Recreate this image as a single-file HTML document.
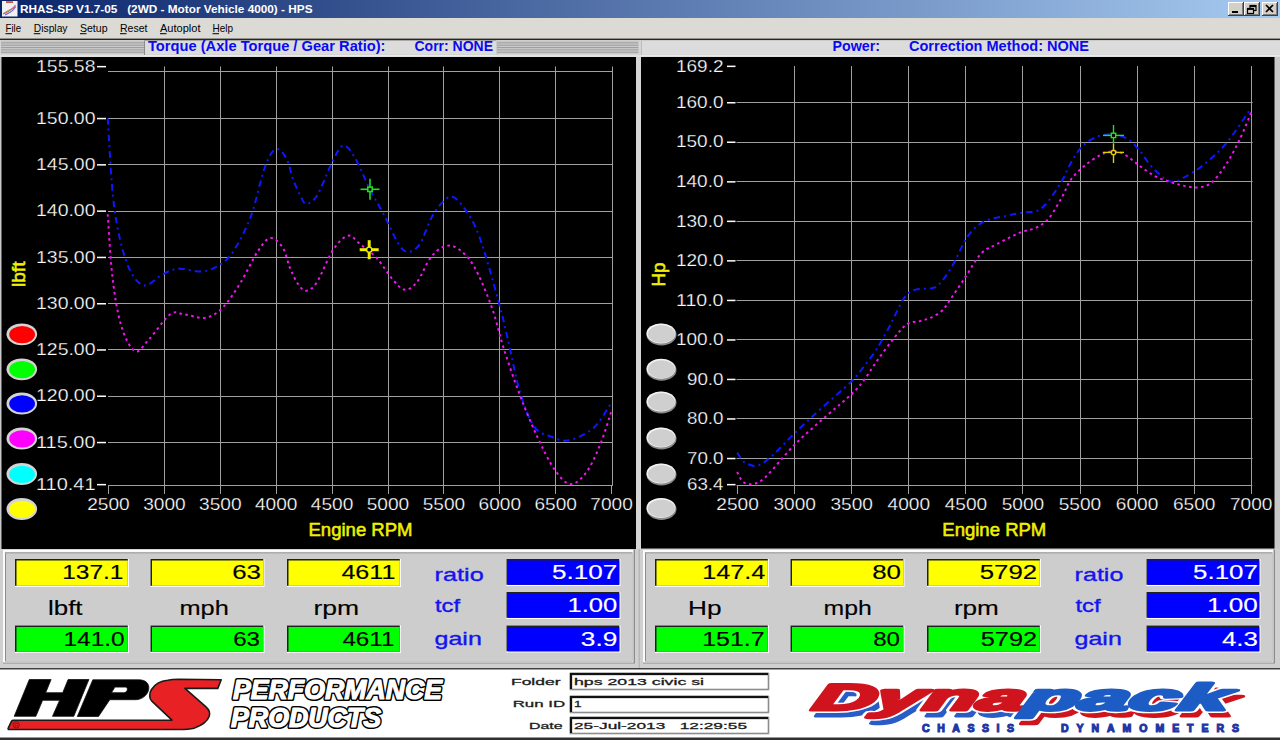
<!DOCTYPE html>
<html><head><meta charset="utf-8"><title>RHAS-SP</title>
<style>html,body{margin:0;padding:0;background:#d4d0c8;overflow:hidden;width:1280px;height:740px}
svg{display:block;font-family:"Liberation Sans",sans-serif}</style></head>
<body><svg width="1280" height="740" viewBox="0 0 1280 740">
<defs>
<linearGradient id="tb" x1="0" x2="1" y1="0" y2="0"><stop offset="0" stop-color="#0a246a"/><stop offset="1" stop-color="#a6caf0"/></linearGradient>
<pattern id="stripes" width="4" height="3" patternUnits="userSpaceOnUse"><rect width="4" height="3" fill="#d8d8d8"/><rect y="1.5" width="4" height="1.5" fill="#a4a4a4"/></pattern>
</defs>
<rect width="1280" height="740" fill="#d4d0c8"/>
<rect x="0" y="0" width="1280" height="18" fill="url(#tb)"/>
<rect x="2" y="1" width="15.5" height="15.5" fill="#f2f0f0"/><rect x="6" y="1.2" width="7" height="1.8" fill="#d05040"/><path d="M3,14 C7,11 11,9.5 15.5,7" stroke="#40c060" stroke-width="1.3" fill="none"/><path d="M4,13.6 C8,11.5 12,10 15.5,5" stroke="#f06060" stroke-width="1.3" fill="none"/><path d="M5,14.8 C9,12.8 13,12 15.5,6.5" stroke="#7070f0" stroke-width="1.3" fill="none"/>
<text x="20.0" y="13.2" font-size="11.5" text-anchor="start" fill="#fff" font-weight="bold" textLength="292.5" lengthAdjust="spacingAndGlyphs" font-family="Liberation Sans, sans-serif">RHAS-SP V1.7-05 &#160; (2WD - Motor Vehicle 4000) - HPS</text>
<rect x="1228" y="2" width="16" height="14" fill="#404040"/><rect x="1228" y="2" width="15" height="13" fill="#ffffff"/><rect x="1229" y="3" width="14" height="12" fill="#808080"/><rect x="1229" y="3" width="13" height="11" fill="#d4d0c8"/>
<rect x="1244" y="2" width="16" height="14" fill="#404040"/><rect x="1244" y="2" width="15" height="13" fill="#ffffff"/><rect x="1245" y="3" width="14" height="12" fill="#808080"/><rect x="1245" y="3" width="13" height="11" fill="#d4d0c8"/>
<rect x="1262" y="2" width="16" height="14" fill="#404040"/><rect x="1262" y="2" width="15" height="13" fill="#ffffff"/><rect x="1263" y="3" width="14" height="12" fill="#808080"/><rect x="1263" y="3" width="13" height="11" fill="#d4d0c8"/>
<rect x="1232" y="11" width="6" height="2" fill="#000"/>
<g fill="none" stroke="#000" stroke-width="1.2"><rect x="1250" y="5.5" width="6" height="5"/><rect x="1247.5" y="8.5" width="6" height="5" fill="#d4d0c8"/><line x1="1250" y1="6.5" x2="1256" y2="6.5"/><line x1="1247.5" y1="9.3" x2="1253.5" y2="9.3"/></g>
<g stroke="#000" stroke-width="1.7"><line x1="1266" y1="5" x2="1273" y2="12"/><line x1="1273" y1="5" x2="1266" y2="12"/></g>
<rect x="0" y="18" width="1280" height="20.5" fill="#dcdad4"/>
<rect x="0" y="38.6" width="1280" height="1.6" fill="#262626"/>
<text x="5.5" y="31.8" font-size="11.5" text-anchor="start" fill="#000" font-weight="normal" textLength="15.5" lengthAdjust="spacingAndGlyphs" font-family="Liberation Sans, sans-serif">File</text>
<rect x="5.5" y="33.2" width="6.5" height="1" fill="#000"/>
<text x="33.8" y="31.8" font-size="11.5" text-anchor="start" fill="#000" font-weight="normal" textLength="33.7" lengthAdjust="spacingAndGlyphs" font-family="Liberation Sans, sans-serif">Display</text>
<rect x="33.8" y="33.2" width="6.5" height="1" fill="#000"/>
<text x="80.0" y="31.8" font-size="11.5" text-anchor="start" fill="#000" font-weight="normal" textLength="27.5" lengthAdjust="spacingAndGlyphs" font-family="Liberation Sans, sans-serif">Setup</text>
<rect x="80.0" y="33.2" width="6.5" height="1" fill="#000"/>
<text x="120.0" y="31.8" font-size="11.5" text-anchor="start" fill="#000" font-weight="normal" textLength="27.5" lengthAdjust="spacingAndGlyphs" font-family="Liberation Sans, sans-serif">Reset</text>
<rect x="120.0" y="33.2" width="6.5" height="1" fill="#000"/>
<text x="160.0" y="31.8" font-size="11.5" text-anchor="start" fill="#000" font-weight="normal" textLength="40.5" lengthAdjust="spacingAndGlyphs" font-family="Liberation Sans, sans-serif">Autoplot</text>
<rect x="160.0" y="33.2" width="6.5" height="1" fill="#000"/>
<text x="212.5" y="31.8" font-size="11.5" text-anchor="start" fill="#000" font-weight="normal" textLength="20.5" lengthAdjust="spacingAndGlyphs" font-family="Liberation Sans, sans-serif">Help</text>
<rect x="212.5" y="33.2" width="6.5" height="1" fill="#000"/>
<rect x="0" y="40.2" width="1280" height="16.8" fill="#d6d6d6"/>
<g transform="translate(1,0) scale(143.3,1)"><rect x="0" y="41.75" width="1" height="0.95" fill="#9c9c9c"/><rect x="0" y="43.50" width="1" height="0.95" fill="#9c9c9c"/><rect x="0" y="45.25" width="1" height="0.95" fill="#9c9c9c"/><rect x="0" y="47.00" width="1" height="0.95" fill="#9c9c9c"/><rect x="0" y="48.75" width="1" height="0.95" fill="#9c9c9c"/><rect x="0" y="50.50" width="1" height="0.95" fill="#9c9c9c"/><rect x="0" y="52.25" width="1" height="0.95" fill="#9c9c9c"/></g>
<g transform="translate(497,0) scale(141.5,1)"><rect x="0" y="41.75" width="1" height="0.95" fill="#9c9c9c"/><rect x="0" y="43.50" width="1" height="0.95" fill="#9c9c9c"/><rect x="0" y="45.25" width="1" height="0.95" fill="#9c9c9c"/><rect x="0" y="47.00" width="1" height="0.95" fill="#9c9c9c"/><rect x="0" y="48.75" width="1" height="0.95" fill="#9c9c9c"/><rect x="0" y="50.50" width="1" height="0.95" fill="#9c9c9c"/><rect x="0" y="52.25" width="1" height="0.95" fill="#9c9c9c"/></g>
<rect x="144" y="40.3" width="353" height="15.2" fill="#fafafa"/><rect x="144" y="40.3" width="352.5" height="14.7" fill="#8c8c8c"/><rect x="145" y="41" width="351.3" height="13.9" fill="#dcdcdc"/>
<rect x="641" y="40.3" width="639" height="15.2" fill="#fafafa"/><rect x="641" y="40.3" width="639" height="14.7" fill="#bcbcbc"/><rect x="642" y="41" width="638" height="13.9" fill="#dcdcdc"/>
<rect x="0" y="55.5" width="1280" height="1" fill="#ececec"/>
<g font-family="Liberation Sans, sans-serif" font-weight="bold" fill="#0a0af0">
<text x="148.0" y="50.7" font-size="14" text-anchor="start" fill="#0a0af0" font-weight="bold" textLength="237.5" lengthAdjust="spacingAndGlyphs" >Torque (Axle Torque / Gear Ratio):</text>
<text x="414.5" y="50.7" font-size="14" text-anchor="start" fill="#0a0af0" font-weight="bold" textLength="78.5" lengthAdjust="spacingAndGlyphs" >Corr: NONE</text>
<text x="832.5" y="50.7" font-size="14" text-anchor="start" fill="#0a0af0" font-weight="bold" textLength="47.5" lengthAdjust="spacingAndGlyphs" >Power:</text>
<text x="909.0" y="50.7" font-size="14" text-anchor="start" fill="#0a0af0" font-weight="bold" textLength="180.0" lengthAdjust="spacingAndGlyphs" >Correction Method: NONE</text>
</g>
<rect x="0" y="57" width="1280" height="492" fill="#c8c8c8"/>
<rect x="1.5" y="57" width="634.5" height="492.5" fill="#000"/>
<rect x="641" y="57" width="633.5" height="491.5" fill="#000"/>
<rect x="636" y="57" width="5" height="492" fill="#d6d6d6"/>
<g stroke="#a0a0a0" stroke-width="1" fill="none"><line x1="164.5" y1="66.5" x2="164.5" y2="485.5" /><line x1="220.5" y1="66.5" x2="220.5" y2="485.5" /><line x1="276.5" y1="66.5" x2="276.5" y2="485.5" /><line x1="332.5" y1="66.5" x2="332.5" y2="485.5" /><line x1="388.5" y1="66.5" x2="388.5" y2="485.5" /><line x1="443.5" y1="66.5" x2="443.5" y2="485.5" /><line x1="499.5" y1="66.5" x2="499.5" y2="485.5" /><line x1="555.5" y1="66.5" x2="555.5" y2="485.5" /><line x1="612.5" y1="66.5" x2="612.5" y2="485.5" /><line x1="108" y1="71.5" x2="612.8" y2="71.5" /><line x1="108" y1="118.5" x2="613" y2="118.5" /><line x1="108" y1="164.5" x2="613" y2="164.5" /><line x1="108" y1="211.5" x2="613" y2="211.5" /><line x1="108" y1="257.5" x2="613" y2="257.5" /><line x1="108" y1="303.5" x2="613" y2="303.5" /><line x1="108" y1="349.5" x2="613" y2="349.5" /><line x1="108" y1="396.5" x2="613" y2="396.5" /><line x1="108" y1="442.5" x2="613" y2="442.5" /><line x1="108" y1="485.5" x2="612.8" y2="485.5" /><line x1="108.5" y1="485.5" x2="108.5" y2="494" /><line x1="164.5" y1="485.5" x2="164.5" y2="494" /><line x1="220.5" y1="485.5" x2="220.5" y2="494" /><line x1="276.5" y1="485.5" x2="276.5" y2="494" /><line x1="332.5" y1="485.5" x2="332.5" y2="494" /><line x1="388.5" y1="485.5" x2="388.5" y2="494" /><line x1="443.5" y1="485.5" x2="443.5" y2="494" /><line x1="499.5" y1="485.5" x2="499.5" y2="494" /><line x1="555.5" y1="485.5" x2="555.5" y2="494" /><line x1="611.5" y1="485.5" x2="611.5" y2="494" /></g><g font-family="Liberation Sans, sans-serif" stroke="#000" stroke-width="0.25"><text x="95.5" y="71.8" font-size="16.5" text-anchor="end" fill="#fff" font-weight="normal" textLength="59.5" lengthAdjust="spacingAndGlyphs" >155.58</text><rect x="97" y="65.9" width="9" height="1.5" fill="#fff" stroke="none"/><text x="95.5" y="123.7" font-size="16.5" text-anchor="end" fill="#fff" font-weight="normal" textLength="59.5" lengthAdjust="spacingAndGlyphs" >150.00</text><rect x="97" y="117.8" width="9" height="1.5" fill="#fff" stroke="none"/><text x="95.5" y="170.0" font-size="16.5" text-anchor="end" fill="#fff" font-weight="normal" textLength="59.5" lengthAdjust="spacingAndGlyphs" >145.00</text><rect x="97" y="164.1" width="9" height="1.5" fill="#fff" stroke="none"/><text x="95.5" y="216.3" font-size="16.5" text-anchor="end" fill="#fff" font-weight="normal" textLength="59.5" lengthAdjust="spacingAndGlyphs" >140.00</text><rect x="97" y="210.4" width="9" height="1.5" fill="#fff" stroke="none"/><text x="95.5" y="262.6" font-size="16.5" text-anchor="end" fill="#fff" font-weight="normal" textLength="59.5" lengthAdjust="spacingAndGlyphs" >135.00</text><rect x="97" y="256.7" width="9" height="1.5" fill="#fff" stroke="none"/><text x="95.5" y="308.9" font-size="16.5" text-anchor="end" fill="#fff" font-weight="normal" textLength="59.5" lengthAdjust="spacingAndGlyphs" >130.00</text><rect x="97" y="303.0" width="9" height="1.5" fill="#fff" stroke="none"/><text x="95.5" y="355.1" font-size="16.5" text-anchor="end" fill="#fff" font-weight="normal" textLength="59.5" lengthAdjust="spacingAndGlyphs" >125.00</text><rect x="97" y="349.2" width="9" height="1.5" fill="#fff" stroke="none"/><text x="95.5" y="401.4" font-size="16.5" text-anchor="end" fill="#fff" font-weight="normal" textLength="59.5" lengthAdjust="spacingAndGlyphs" >120.00</text><rect x="97" y="395.5" width="9" height="1.5" fill="#fff" stroke="none"/><text x="95.5" y="447.7" font-size="16.5" text-anchor="end" fill="#fff" font-weight="normal" textLength="59.5" lengthAdjust="spacingAndGlyphs" >115.00</text><rect x="97" y="441.8" width="9" height="1.5" fill="#fff" stroke="none"/><text x="95.5" y="489.8" font-size="16.5" text-anchor="end" fill="#fff" font-weight="normal" textLength="59.5" lengthAdjust="spacingAndGlyphs" >110.41</text><rect x="97" y="483.9" width="9" height="1.5" fill="#fff" stroke="none"/><text x="108.5" y="509.6" font-size="16.5" text-anchor="middle" fill="#fff" font-weight="normal" textLength="42.5" lengthAdjust="spacingAndGlyphs" >2500</text><text x="164.4" y="509.6" font-size="16.5" text-anchor="middle" fill="#fff" font-weight="normal" textLength="42.5" lengthAdjust="spacingAndGlyphs" >3000</text><text x="220.3" y="509.6" font-size="16.5" text-anchor="middle" fill="#fff" font-weight="normal" textLength="42.5" lengthAdjust="spacingAndGlyphs" >3500</text><text x="276.2" y="509.6" font-size="16.5" text-anchor="middle" fill="#fff" font-weight="normal" textLength="42.5" lengthAdjust="spacingAndGlyphs" >4000</text><text x="332.1" y="509.6" font-size="16.5" text-anchor="middle" fill="#fff" font-weight="normal" textLength="42.5" lengthAdjust="spacingAndGlyphs" >4500</text><text x="388.0" y="509.6" font-size="16.5" text-anchor="middle" fill="#fff" font-weight="normal" textLength="42.5" lengthAdjust="spacingAndGlyphs" >5000</text><text x="443.9" y="509.6" font-size="16.5" text-anchor="middle" fill="#fff" font-weight="normal" textLength="42.5" lengthAdjust="spacingAndGlyphs" >5500</text><text x="499.8" y="509.6" font-size="16.5" text-anchor="middle" fill="#fff" font-weight="normal" textLength="42.5" lengthAdjust="spacingAndGlyphs" >6000</text><text x="555.7" y="509.6" font-size="16.5" text-anchor="middle" fill="#fff" font-weight="normal" textLength="42.5" lengthAdjust="spacingAndGlyphs" >6500</text><text x="611.6" y="509.6" font-size="16.5" text-anchor="middle" fill="#fff" font-weight="normal" textLength="42.5" lengthAdjust="spacingAndGlyphs" >7000</text></g>
<g stroke="#a0a0a0" stroke-width="1" fill="none"><line x1="794.5" y1="66" x2="794.5" y2="485.5" /><line x1="851.5" y1="66" x2="851.5" y2="485.5" /><line x1="908.5" y1="66" x2="908.5" y2="485.5" /><line x1="965.5" y1="66" x2="965.5" y2="485.5" /><line x1="1022.5" y1="66" x2="1022.5" y2="485.5" /><line x1="1080.5" y1="66" x2="1080.5" y2="485.5" /><line x1="1137.5" y1="66" x2="1137.5" y2="485.5" /><line x1="1194.5" y1="66" x2="1194.5" y2="485.5" /><line x1="1251.5" y1="66" x2="1251.5" y2="485.5" /><line x1="736.5" y1="102.5" x2="1252.5" y2="102.5" /><line x1="736.5" y1="142.5" x2="1252.5" y2="142.5" /><line x1="736.5" y1="181.5" x2="1252.5" y2="181.5" /><line x1="736.5" y1="221.5" x2="1252.5" y2="221.5" /><line x1="736.5" y1="260.5" x2="1252.5" y2="260.5" /><line x1="736.5" y1="300.5" x2="1252.5" y2="300.5" /><line x1="736.5" y1="339.5" x2="1252.5" y2="339.5" /><line x1="736.5" y1="379.5" x2="1252.5" y2="379.5" /><line x1="736.5" y1="418.5" x2="1252.5" y2="418.5" /><line x1="736.5" y1="458.5" x2="1252.5" y2="458.5" /><line x1="736.5" y1="485.5" x2="1252.3" y2="485.5" /><line x1="737.5" y1="485.5" x2="737.5" y2="494" /><line x1="794.5" y1="485.5" x2="794.5" y2="494" /><line x1="851.5" y1="485.5" x2="851.5" y2="494" /><line x1="908.5" y1="485.5" x2="908.5" y2="494" /><line x1="965.5" y1="485.5" x2="965.5" y2="494" /><line x1="1022.5" y1="485.5" x2="1022.5" y2="494" /><line x1="1080.5" y1="485.5" x2="1080.5" y2="494" /><line x1="1137.5" y1="485.5" x2="1137.5" y2="494" /><line x1="1194.5" y1="485.5" x2="1194.5" y2="494" /><line x1="1251.5" y1="485.5" x2="1251.5" y2="494" /></g><g font-family="Liberation Sans, sans-serif" stroke="#000" stroke-width="0.25"><text x="723.5" y="71.5" font-size="16.5" text-anchor="end" fill="#fff" font-weight="normal" textLength="47.5" lengthAdjust="spacingAndGlyphs" >169.2</text><rect x="727" y="65.6" width="8.5" height="1.5" fill="#fff" stroke="none"/><text x="723.5" y="107.9" font-size="16.5" text-anchor="end" fill="#fff" font-weight="normal" textLength="47.5" lengthAdjust="spacingAndGlyphs" >160.0</text><rect x="727" y="102.0" width="8.5" height="1.5" fill="#fff" stroke="none"/><text x="723.5" y="147.4" font-size="16.5" text-anchor="end" fill="#fff" font-weight="normal" textLength="47.5" lengthAdjust="spacingAndGlyphs" >150.0</text><rect x="727" y="141.5" width="8.5" height="1.5" fill="#fff" stroke="none"/><text x="723.5" y="187.0" font-size="16.5" text-anchor="end" fill="#fff" font-weight="normal" textLength="47.5" lengthAdjust="spacingAndGlyphs" >140.0</text><rect x="727" y="181.1" width="8.5" height="1.5" fill="#fff" stroke="none"/><text x="723.5" y="226.5" font-size="16.5" text-anchor="end" fill="#fff" font-weight="normal" textLength="47.5" lengthAdjust="spacingAndGlyphs" >130.0</text><rect x="727" y="220.6" width="8.5" height="1.5" fill="#fff" stroke="none"/><text x="723.5" y="266.0" font-size="16.5" text-anchor="end" fill="#fff" font-weight="normal" textLength="47.5" lengthAdjust="spacingAndGlyphs" >120.0</text><rect x="727" y="260.1" width="8.5" height="1.5" fill="#fff" stroke="none"/><text x="723.5" y="305.6" font-size="16.5" text-anchor="end" fill="#fff" font-weight="normal" textLength="47.5" lengthAdjust="spacingAndGlyphs" >110.0</text><rect x="727" y="299.7" width="8.5" height="1.5" fill="#fff" stroke="none"/><text x="723.5" y="345.1" font-size="16.5" text-anchor="end" fill="#fff" font-weight="normal" textLength="47.5" lengthAdjust="spacingAndGlyphs" >100.0</text><rect x="727" y="339.2" width="8.5" height="1.5" fill="#fff" stroke="none"/><text x="723.5" y="384.6" font-size="16.5" text-anchor="end" fill="#fff" font-weight="normal" textLength="36.5" lengthAdjust="spacingAndGlyphs" >90.0</text><rect x="727" y="378.7" width="8.5" height="1.5" fill="#fff" stroke="none"/><text x="723.5" y="424.1" font-size="16.5" text-anchor="end" fill="#fff" font-weight="normal" textLength="36.5" lengthAdjust="spacingAndGlyphs" >80.0</text><rect x="727" y="418.2" width="8.5" height="1.5" fill="#fff" stroke="none"/><text x="723.5" y="463.7" font-size="16.5" text-anchor="end" fill="#fff" font-weight="normal" textLength="36.5" lengthAdjust="spacingAndGlyphs" >70.0</text><rect x="727" y="457.8" width="8.5" height="1.5" fill="#fff" stroke="none"/><text x="723.5" y="489.8" font-size="16.5" text-anchor="end" fill="#fff" font-weight="normal" textLength="36.5" lengthAdjust="spacingAndGlyphs" >63.4</text><rect x="727" y="483.9" width="8.5" height="1.5" fill="#fff" stroke="none"/><text x="737.6" y="509.6" font-size="16.5" text-anchor="middle" fill="#fff" font-weight="normal" textLength="42.5" lengthAdjust="spacingAndGlyphs" >2500</text><text x="794.7" y="509.6" font-size="16.5" text-anchor="middle" fill="#fff" font-weight="normal" textLength="42.5" lengthAdjust="spacingAndGlyphs" >3000</text><text x="851.7" y="509.6" font-size="16.5" text-anchor="middle" fill="#fff" font-weight="normal" textLength="42.5" lengthAdjust="spacingAndGlyphs" >3500</text><text x="908.8" y="509.6" font-size="16.5" text-anchor="middle" fill="#fff" font-weight="normal" textLength="42.5" lengthAdjust="spacingAndGlyphs" >4000</text><text x="965.9" y="509.6" font-size="16.5" text-anchor="middle" fill="#fff" font-weight="normal" textLength="42.5" lengthAdjust="spacingAndGlyphs" >4500</text><text x="1023.0" y="509.6" font-size="16.5" text-anchor="middle" fill="#fff" font-weight="normal" textLength="42.5" lengthAdjust="spacingAndGlyphs" >5000</text><text x="1080.0" y="509.6" font-size="16.5" text-anchor="middle" fill="#fff" font-weight="normal" textLength="42.5" lengthAdjust="spacingAndGlyphs" >5500</text><text x="1137.1" y="509.6" font-size="16.5" text-anchor="middle" fill="#fff" font-weight="normal" textLength="42.5" lengthAdjust="spacingAndGlyphs" >6000</text><text x="1194.2" y="509.6" font-size="16.5" text-anchor="middle" fill="#fff" font-weight="normal" textLength="42.5" lengthAdjust="spacingAndGlyphs" >6500</text><text x="1251.2" y="509.6" font-size="16.5" text-anchor="middle" fill="#fff" font-weight="normal" textLength="42.5" lengthAdjust="spacingAndGlyphs" >7000</text></g>
<path d="M107.7,118.3 C108.8,132.8 110.9,181.5 114.0,205.4 C117.1,229.3 121.6,248.3 126.4,261.6 C131.2,274.9 136.8,283.1 142.9,285.2 C149.0,287.3 157.2,276.8 163.2,274.0 C169.2,271.2 172.6,269.1 179.0,268.7 C185.4,268.3 195.2,272.1 201.9,271.5 C208.7,270.9 214.2,268.4 219.5,265.0 C224.8,261.6 228.2,259.2 233.5,251.0 C238.8,242.8 245.8,230.0 251.0,216.0 C256.2,202.0 260.9,177.9 265.0,166.8 C269.1,155.7 272.2,150.7 275.7,149.2 C279.2,147.7 283.3,153.0 286.2,158.0 C289.1,163.0 290.7,172.8 293.0,179.0 C295.3,185.2 297.8,190.9 300.0,195.0 C302.2,199.1 303.4,203.7 306.2,203.8 C309.0,203.9 312.9,202.0 317.0,195.7 C321.1,189.4 326.2,174.3 330.5,166.0 C334.8,157.7 338.6,147.1 342.7,145.7 C346.8,144.3 350.4,150.6 354.9,157.8 C359.4,165.0 364.8,179.3 369.7,189.0 C374.6,198.7 379.9,207.0 384.6,216.0 C389.3,225.0 394.2,237.0 398.0,243.0 C401.8,249.0 404.0,251.7 407.6,251.9 C411.2,252.1 415.4,250.5 419.7,244.3 C424.0,238.1 428.2,222.5 433.2,214.6 C438.2,206.7 444.5,198.3 449.5,197.0 C454.5,195.7 458.1,200.0 463.0,206.5 C467.9,213.0 473.3,220.4 479.2,236.2 C485.1,252.0 493.6,283.3 498.6,301.5 C503.6,319.7 505.7,330.5 509.2,345.4 C512.7,360.3 515.6,377.5 519.7,391.0 C523.8,404.5 528.5,418.6 533.8,426.2 C539.1,433.8 545.5,434.4 551.4,436.8 C557.3,439.2 562.0,441.8 569.0,440.3 C576.0,438.8 586.5,434.1 593.5,428.0 C600.5,421.9 608.1,407.5 611.0,403.4" fill="none" stroke="#0c18ff" stroke-width="2" stroke-dasharray="6.5 4 2 4" stroke-linecap="butt"/><path d="M107.7,214.2 C108.5,224.4 110.1,257.2 112.3,275.7 C114.5,294.2 117.2,312.4 121.0,325.0 C124.8,337.6 130.3,348.9 135.0,351.2 C139.7,353.5 143.3,345.1 149.2,339.0 C155.1,332.9 164.5,318.4 170.3,314.3 C176.2,310.2 178.5,313.7 184.3,314.3 C190.2,314.9 199.0,319.0 205.4,317.8 C211.8,316.6 217.2,313.2 223.0,307.3 C228.8,301.4 234.7,292.1 240.5,282.7 C246.3,273.3 253.0,258.4 258.0,251.0 C263.0,243.6 266.3,238.6 270.4,238.0 C274.5,237.4 279.4,242.6 282.7,247.6 C286.0,252.6 287.4,261.9 290.0,268.0 C292.6,274.1 295.3,280.2 298.0,284.0 C300.7,287.8 303.0,291.1 306.2,290.8 C309.4,290.5 312.5,288.9 317.0,282.0 C321.5,275.1 328.0,257.4 333.2,249.7 C338.4,242.0 343.5,236.6 348.0,235.7 C352.5,234.8 355.6,240.6 360.3,244.3 C365.1,248.0 371.1,251.9 376.5,257.8 C381.9,263.7 388.0,274.2 392.7,279.5 C397.4,284.8 400.8,289.3 404.9,289.7 C408.9,290.1 412.7,287.3 417.0,282.0 C421.3,276.7 426.0,263.7 430.5,257.8 C435.0,251.9 439.5,248.1 444.0,246.5 C448.5,244.9 452.6,245.2 457.6,248.4 C462.6,251.7 468.1,256.3 473.8,266.0 C479.5,275.7 486.6,293.0 491.6,306.8 C496.6,320.6 499.2,334.4 503.9,349.0 C508.6,363.6 514.1,380.0 519.7,394.6 C525.3,409.2 531.4,424.2 537.3,436.8 C543.2,449.4 549.3,462.2 554.9,470.1 C560.5,478.0 565.4,483.9 570.7,484.2 C576.0,484.5 581.5,478.7 586.5,472.0 C591.5,465.3 596.4,453.8 600.5,443.8 C604.6,433.8 609.2,417.5 611.0,412.2" fill="none" stroke="#f014f0" stroke-width="2" stroke-dasharray="2.6 3.4"/>
<path d="M737.1,452.6 C738.4,454.2 741.2,460.1 744.6,462.3 C748.0,464.5 753.0,466.7 757.6,465.6 C762.2,464.5 765.9,461.2 772.1,455.8 C778.3,450.4 786.7,440.9 794.8,433.1 C802.9,425.3 811.3,417.4 820.8,408.8 C830.3,400.2 844.5,388.3 851.6,381.3 C858.7,374.3 859.7,371.7 863.5,366.9 C867.3,362.1 871.4,356.9 874.3,352.7 C877.2,348.5 878.5,346.2 881.0,341.9 C883.5,337.6 886.9,331.3 889.2,327.0 C891.5,322.7 892.5,320.5 894.6,316.2 C896.7,311.9 899.8,305.2 902.0,301.4 C904.2,297.6 905.6,295.5 908.0,293.5 C910.4,291.5 912.4,290.2 916.2,289.4 C920.0,288.5 927.0,289.2 930.8,288.4 C934.6,287.6 935.4,288.1 938.9,284.5 C942.4,280.9 947.0,274.8 951.9,266.7 C956.8,258.6 962.6,243.5 968.0,235.9 C973.4,228.3 977.8,224.7 984.3,221.3 C990.8,218.0 1000.5,217.3 1007.0,215.8 C1013.5,214.3 1018.1,213.4 1023.2,212.5 C1028.3,211.6 1033.5,212.7 1037.8,210.6 C1042.1,208.5 1045.1,205.2 1049.1,200.2 C1053.1,195.2 1058.3,187.2 1062.0,180.8 C1065.7,174.4 1068.0,167.7 1071.4,161.9 C1074.9,156.1 1078.3,150.1 1082.7,145.8 C1087.1,141.6 1092.8,138.3 1097.8,136.4 C1102.8,134.5 1108.0,134.0 1113.0,134.5 C1118.0,135.0 1123.7,136.5 1128.1,139.2 C1132.5,141.9 1135.7,146.1 1139.5,150.5 C1143.3,154.9 1146.7,161.1 1150.8,165.7 C1154.9,170.3 1160.2,175.3 1164.0,178.0 C1167.8,180.7 1170.0,182.0 1173.5,181.8 C1177.0,181.6 1179.9,179.8 1184.9,177.0 C1190.0,174.2 1196.9,170.4 1203.8,164.7 C1210.7,159.0 1218.6,152.4 1226.5,143.0 C1234.4,133.6 1247.0,113.8 1251.1,108.0" fill="none" stroke="#0c18ff" stroke-width="2" stroke-dasharray="6.5 4 2 4" stroke-linecap="butt"/><path d="M737.1,472.0 C738.1,473.6 740.4,479.8 743.0,481.8 C745.6,483.8 748.9,484.8 752.7,484.0 C756.5,483.2 758.7,483.5 765.7,476.9 C772.7,470.3 784.5,454.8 794.8,444.5 C805.0,434.2 817.7,423.7 827.2,415.3 C836.7,406.9 845.4,400.1 851.6,394.2 C857.8,388.3 860.0,385.3 864.2,379.7 C868.4,374.1 872.2,367.6 877.0,360.8 C881.8,354.1 888.2,345.3 893.2,339.2 C898.2,333.1 902.3,327.3 906.8,324.3 C911.3,321.3 916.3,322.1 920.3,321.0 C924.3,319.9 927.4,319.3 931.0,317.6 C934.6,315.9 939.0,313.4 941.9,310.8 C944.8,308.2 944.8,307.5 948.6,302.0 C952.4,296.5 959.4,286.1 964.8,278.0 C970.2,269.9 975.6,259.4 981.0,253.7 C986.4,248.0 990.7,247.5 997.2,244.0 C1003.7,240.5 1013.5,235.3 1020.0,232.6 C1026.5,229.9 1031.2,230.2 1036.0,227.8 C1040.8,225.4 1044.8,223.1 1049.1,218.0 C1053.4,212.9 1058.3,203.4 1062.0,197.0 C1065.7,190.6 1067.2,184.7 1071.0,179.5 C1074.8,174.3 1079.5,169.9 1084.6,165.7 C1089.7,161.5 1096.9,156.7 1101.6,154.3 C1106.3,151.9 1109.2,151.5 1113.0,151.5 C1116.8,151.5 1119.9,151.9 1124.3,154.3 C1128.7,156.7 1134.5,162.1 1139.5,165.7 C1144.5,169.3 1149.6,173.3 1154.6,176.0 C1159.6,178.7 1165.0,180.2 1169.7,181.8 C1174.4,183.4 1178.3,184.7 1183.0,185.6 C1187.7,186.5 1193.4,187.9 1198.1,187.4 C1202.8,186.9 1206.7,186.6 1211.4,182.7 C1216.1,178.8 1221.8,171.1 1226.5,163.8 C1231.2,156.6 1235.7,147.7 1239.8,139.2 C1243.9,130.7 1249.2,117.1 1251.1,112.7" fill="none" stroke="#f014f0" stroke-width="2" stroke-dasharray="2.6 3.4"/>
<g stroke="#20e020" stroke-width="1.6" fill="none"><line x1="360.5" y1="189.3" x2="379.5" y2="189.3"/><line x1="370.0" y1="178.8" x2="370.0" y2="199.8"/><rect x="367.8" y="187.1" width="4.4" height="4.4" fill="#000"/></g>
<g stroke="#f0f000" stroke-width="3" fill="none"><line x1="359.7" y1="249.7" x2="378.7" y2="249.7"/><line x1="369.2" y1="240.2" x2="369.2" y2="259.2"/><circle cx="369.2" cy="249.7" r="2.6" fill="#000" stroke-width="1.4"/></g>
<g stroke="#20e020" stroke-width="1.4" fill="none"><line x1="1103" y1="135.4" x2="1124" y2="135.4"/><line x1="1113.5" y1="125" x2="1113.5" y2="143.5"/><rect x="1111.3" y="133.2" width="4.4" height="4.4" fill="#000"/></g>
<g stroke="#e0d000" stroke-width="1.4" fill="none"><line x1="1103" y1="152.4" x2="1124" y2="152.4"/><line x1="1113.5" y1="143.5" x2="1113.5" y2="163"/><circle cx="1113.5" cy="152.4" r="2.2" fill="#000"/></g>
<g font-family="Liberation Sans, sans-serif" fill="#f0f000" stroke="#f0f000" stroke-width="0.55">
<text x="360.5" y="536.0" font-size="18.5" text-anchor="middle" fill="#f0f000" font-weight="normal" textLength="104.0" lengthAdjust="spacingAndGlyphs" >Engine RPM</text>
<text x="994.3" y="536.0" font-size="18.5" text-anchor="middle" fill="#f0f000" font-weight="normal" textLength="104.0" lengthAdjust="spacingAndGlyphs" >Engine RPM</text>
<text x="0" y="0" font-size="18.5" fill="#f0f000" transform="translate(25,287) rotate(-90)" textLength="25.5" lengthAdjust="spacingAndGlyphs">lbft</text>
<text x="0" y="0" font-size="18.5" fill="#f0f000" transform="translate(665,286.5) rotate(-90)" textLength="24" lengthAdjust="spacingAndGlyphs">Hp</text>
</g>
<ellipse cx="21.8" cy="334.3" rx="15.3" ry="10.9" fill="#d4d4d4"/><ellipse cx="22.1" cy="334.6" rx="12.9" ry="8.6" fill="#ff0000"/>
<ellipse cx="21.8" cy="369.3" rx="15.3" ry="10.9" fill="#d4d4d4"/><ellipse cx="22.1" cy="369.6" rx="12.9" ry="8.6" fill="#00ff00"/>
<ellipse cx="21.8" cy="403.5" rx="15.3" ry="10.9" fill="#d4d4d4"/><ellipse cx="22.1" cy="403.8" rx="12.9" ry="8.6" fill="#0000ff"/>
<ellipse cx="21.8" cy="438.5" rx="15.3" ry="10.9" fill="#d4d4d4"/><ellipse cx="22.1" cy="438.8" rx="12.9" ry="8.6" fill="#ff00ff"/>
<ellipse cx="21.8" cy="474.0" rx="15.3" ry="10.9" fill="#d4d4d4"/><ellipse cx="22.1" cy="474.3" rx="12.9" ry="8.6" fill="#00ffff"/>
<ellipse cx="21.8" cy="509.0" rx="15.3" ry="10.9" fill="#d4d4d4"/><ellipse cx="22.1" cy="509.3" rx="12.9" ry="8.6" fill="#ffff00"/>
<ellipse cx="661.5" cy="334.6" rx="15" ry="10.8" fill="#8c8c8c"/><ellipse cx="661.0" cy="333.4" rx="14.5" ry="10" fill="#f2f2f2"/><ellipse cx="661.5" cy="334.0" rx="13.5" ry="9" fill="#cfcfcf"/>
<ellipse cx="661.5" cy="369.9" rx="15" ry="10.8" fill="#8c8c8c"/><ellipse cx="661.0" cy="368.7" rx="14.5" ry="10" fill="#f2f2f2"/><ellipse cx="661.5" cy="369.3" rx="13.5" ry="9" fill="#cfcfcf"/>
<ellipse cx="661.5" cy="402.6" rx="15" ry="10.8" fill="#8c8c8c"/><ellipse cx="661.0" cy="401.4" rx="14.5" ry="10" fill="#f2f2f2"/><ellipse cx="661.5" cy="402.0" rx="13.5" ry="9" fill="#cfcfcf"/>
<ellipse cx="661.5" cy="438.6" rx="15" ry="10.8" fill="#8c8c8c"/><ellipse cx="661.0" cy="437.4" rx="14.5" ry="10" fill="#f2f2f2"/><ellipse cx="661.5" cy="438.0" rx="13.5" ry="9" fill="#cfcfcf"/>
<ellipse cx="661.5" cy="474.6" rx="15" ry="10.8" fill="#8c8c8c"/><ellipse cx="661.0" cy="473.4" rx="14.5" ry="10" fill="#f2f2f2"/><ellipse cx="661.5" cy="474.0" rx="13.5" ry="9" fill="#cfcfcf"/>
<ellipse cx="661.5" cy="509.1" rx="15" ry="10.8" fill="#8c8c8c"/><ellipse cx="661.0" cy="507.9" rx="14.5" ry="10" fill="#f2f2f2"/><ellipse cx="661.5" cy="508.5" rx="13.5" ry="9" fill="#cfcfcf"/>
<rect x="0" y="549" width="1280" height="120" fill="#d0d0d0"/><rect x="638.5" y="549" width="1.5" height="119" fill="#b8b8b8"/>
<rect x="3.0" y="549.5" width="632" height="114" fill="#8c8c8c"/><rect x="3.0" y="549.5" width="630.5" height="113" fill="#fbfbfb"/><rect x="5.0" y="552.3" width="627.5" height="109.2" fill="#8c8c8c"/><rect x="6.0" y="553.3" width="626.5" height="108.2" fill="#cdcdcd"/><rect x="15.0" y="559.0" width="114.0" height="28.0" fill="#ffffff"/><rect x="15.0" y="559.0" width="112.8" height="26.8" fill="#202020"/><rect x="16.5" y="560.5" width="111.3" height="25.3" fill="#ffff00"/><rect x="15.0" y="625.5" width="114.0" height="27.5" fill="#ffffff"/><rect x="15.0" y="625.5" width="112.8" height="26.3" fill="#202020"/><rect x="16.5" y="627.0" width="111.3" height="24.8" fill="#00ff00"/><rect x="150.5" y="559.0" width="114.0" height="28.0" fill="#ffffff"/><rect x="150.5" y="559.0" width="112.8" height="26.8" fill="#202020"/><rect x="152.0" y="560.5" width="111.3" height="25.3" fill="#ffff00"/><rect x="150.5" y="625.5" width="114.0" height="27.5" fill="#ffffff"/><rect x="150.5" y="625.5" width="112.8" height="26.3" fill="#202020"/><rect x="152.0" y="627.0" width="111.3" height="24.8" fill="#00ff00"/><rect x="287.0" y="559.0" width="114.0" height="28.0" fill="#ffffff"/><rect x="287.0" y="559.0" width="112.8" height="26.8" fill="#202020"/><rect x="288.5" y="560.5" width="111.3" height="25.3" fill="#ffff00"/><rect x="287.0" y="625.5" width="114.0" height="27.5" fill="#ffffff"/><rect x="287.0" y="625.5" width="112.8" height="26.3" fill="#202020"/><rect x="288.5" y="627.0" width="111.3" height="24.8" fill="#00ff00"/><rect x="506.5" y="559.0" width="114.0" height="27.0" fill="#ffffff"/><rect x="506.5" y="559.0" width="112.8" height="25.8" fill="#202020"/><rect x="508.0" y="560.5" width="111.3" height="24.3" fill="#0000ff"/><rect x="506.5" y="592.0" width="114.0" height="27.0" fill="#ffffff"/><rect x="506.5" y="592.0" width="112.8" height="25.8" fill="#202020"/><rect x="508.0" y="593.5" width="111.3" height="24.3" fill="#0000ff"/><rect x="506.5" y="625.5" width="114.0" height="27.0" fill="#ffffff"/><rect x="506.5" y="625.5" width="112.8" height="25.8" fill="#202020"/><rect x="508.0" y="627.0" width="111.3" height="24.3" fill="#0000ff"/><g font-family="Liberation Sans, sans-serif"><text x="62.2" y="579.0" font-size="19.5" text-anchor="start" fill="#000" font-weight="normal" textLength="61.2" lengthAdjust="spacingAndGlyphs" stroke="#000" stroke-width="0.15">137.1</text><text x="232.2" y="579.0" font-size="19.5" text-anchor="start" fill="#000" font-weight="normal" textLength="28.8" lengthAdjust="spacingAndGlyphs" stroke="#000" stroke-width="0.15">63</text><text x="341.4" y="579.0" font-size="19.5" text-anchor="start" fill="#000" font-weight="normal" textLength="54.0" lengthAdjust="spacingAndGlyphs" stroke="#000" stroke-width="0.15">4611</text><text x="63.5" y="646.0" font-size="19.5" text-anchor="start" fill="#000" font-weight="normal" textLength="61.2" lengthAdjust="spacingAndGlyphs" stroke="#000" stroke-width="0.15">141.0</text><text x="233.2" y="646.0" font-size="19.5" text-anchor="start" fill="#000" font-weight="normal" textLength="26.8" lengthAdjust="spacingAndGlyphs" stroke="#000" stroke-width="0.15">63</text><text x="342.4" y="646.0" font-size="19.5" text-anchor="start" fill="#000" font-weight="normal" textLength="52.0" lengthAdjust="spacingAndGlyphs" stroke="#000" stroke-width="0.15">4611</text><text x="48.0" y="615.0" font-size="19.5" text-anchor="start" fill="#000" font-weight="normal" textLength="34.5" lengthAdjust="spacingAndGlyphs" stroke="#000" stroke-width="0.15">lbft</text><text x="179.5" y="615.0" font-size="19.5" text-anchor="start" fill="#000" font-weight="normal" textLength="49.3" lengthAdjust="spacingAndGlyphs" stroke="#000" stroke-width="0.15">mph</text><text x="313.5" y="615.0" font-size="19.5" text-anchor="start" fill="#000" font-weight="normal" textLength="45.7" lengthAdjust="spacingAndGlyphs" stroke="#000" stroke-width="0.15">rpm</text><text x="434.6" y="580.8" font-size="18.5" text-anchor="start" fill="#1414f0" font-weight="normal" textLength="49.2" lengthAdjust="spacingAndGlyphs" stroke="#1414f0" stroke-width="0.35">ratio</text><text x="435.0" y="612.4" font-size="18.5" text-anchor="start" fill="#1414f0" font-weight="normal" textLength="25.1" lengthAdjust="spacingAndGlyphs" stroke="#1414f0" stroke-width="0.35">tcf</text><text x="434.6" y="644.8" font-size="18.5" text-anchor="start" fill="#1414f0" font-weight="normal" textLength="47.2" lengthAdjust="spacingAndGlyphs" stroke="#1414f0" stroke-width="0.35">gain</text><text x="552.0" y="579.0" font-size="19.5" text-anchor="start" fill="#fff" font-weight="normal" textLength="65.3" lengthAdjust="spacingAndGlyphs" stroke="#fff" stroke-width="0.15">5.107</text><text x="567.5" y="611.8" font-size="19.5" text-anchor="start" fill="#fff" font-weight="normal" textLength="49.8" lengthAdjust="spacingAndGlyphs" stroke="#fff" stroke-width="0.15">1.00</text><text x="580.8" y="646.0" font-size="19.5" text-anchor="start" fill="#fff" font-weight="normal" textLength="36.5" lengthAdjust="spacingAndGlyphs" stroke="#fff" stroke-width="0.15">3.9</text></g>
<rect x="643.0" y="549.5" width="632" height="114" fill="#8c8c8c"/><rect x="643.0" y="549.5" width="630.5" height="113" fill="#fbfbfb"/><rect x="645.0" y="552.3" width="627.5" height="109.2" fill="#8c8c8c"/><rect x="646.0" y="553.3" width="626.5" height="108.2" fill="#cdcdcd"/><rect x="655.0" y="559.0" width="114.0" height="28.0" fill="#ffffff"/><rect x="655.0" y="559.0" width="112.8" height="26.8" fill="#202020"/><rect x="656.5" y="560.5" width="111.3" height="25.3" fill="#ffff00"/><rect x="655.0" y="625.5" width="114.0" height="27.5" fill="#ffffff"/><rect x="655.0" y="625.5" width="112.8" height="26.3" fill="#202020"/><rect x="656.5" y="627.0" width="111.3" height="24.8" fill="#00ff00"/><rect x="790.5" y="559.0" width="114.0" height="28.0" fill="#ffffff"/><rect x="790.5" y="559.0" width="112.8" height="26.8" fill="#202020"/><rect x="792.0" y="560.5" width="111.3" height="25.3" fill="#ffff00"/><rect x="790.5" y="625.5" width="114.0" height="27.5" fill="#ffffff"/><rect x="790.5" y="625.5" width="112.8" height="26.3" fill="#202020"/><rect x="792.0" y="627.0" width="111.3" height="24.8" fill="#00ff00"/><rect x="927.0" y="559.0" width="114.0" height="28.0" fill="#ffffff"/><rect x="927.0" y="559.0" width="112.8" height="26.8" fill="#202020"/><rect x="928.5" y="560.5" width="111.3" height="25.3" fill="#ffff00"/><rect x="927.0" y="625.5" width="114.0" height="27.5" fill="#ffffff"/><rect x="927.0" y="625.5" width="112.8" height="26.3" fill="#202020"/><rect x="928.5" y="627.0" width="111.3" height="24.8" fill="#00ff00"/><rect x="1146.5" y="559.0" width="114.0" height="27.0" fill="#ffffff"/><rect x="1146.5" y="559.0" width="112.8" height="25.8" fill="#202020"/><rect x="1148.0" y="560.5" width="111.3" height="24.3" fill="#0000ff"/><rect x="1146.5" y="592.0" width="114.0" height="27.0" fill="#ffffff"/><rect x="1146.5" y="592.0" width="112.8" height="25.8" fill="#202020"/><rect x="1148.0" y="593.5" width="111.3" height="24.3" fill="#0000ff"/><rect x="1146.5" y="625.5" width="114.0" height="27.0" fill="#ffffff"/><rect x="1146.5" y="625.5" width="112.8" height="25.8" fill="#202020"/><rect x="1148.0" y="627.0" width="111.3" height="24.3" fill="#0000ff"/><g font-family="Liberation Sans, sans-serif"><text x="702.2" y="579.0" font-size="19.5" text-anchor="start" fill="#000" font-weight="normal" textLength="63.2" lengthAdjust="spacingAndGlyphs" stroke="#000" stroke-width="0.15">147.4</text><text x="872.2" y="579.0" font-size="19.5" text-anchor="start" fill="#000" font-weight="normal" textLength="28.8" lengthAdjust="spacingAndGlyphs" stroke="#000" stroke-width="0.15">80</text><text x="979.8" y="579.0" font-size="19.5" text-anchor="start" fill="#000" font-weight="normal" textLength="57.3" lengthAdjust="spacingAndGlyphs" stroke="#000" stroke-width="0.15">5792</text><text x="702.2" y="646.0" font-size="19.5" text-anchor="start" fill="#000" font-weight="normal" textLength="62.5" lengthAdjust="spacingAndGlyphs" stroke="#000" stroke-width="0.15">151.7</text><text x="873.2" y="646.0" font-size="19.5" text-anchor="start" fill="#000" font-weight="normal" textLength="26.8" lengthAdjust="spacingAndGlyphs" stroke="#000" stroke-width="0.15">80</text><text x="980.8" y="646.0" font-size="19.5" text-anchor="start" fill="#000" font-weight="normal" textLength="56.3" lengthAdjust="spacingAndGlyphs" stroke="#000" stroke-width="0.15">5792</text><text x="688.0" y="615.0" font-size="19.5" text-anchor="start" fill="#000" font-weight="normal" textLength="33.5" lengthAdjust="spacingAndGlyphs" stroke="#000" stroke-width="0.15">Hp</text><text x="823.6" y="615.0" font-size="19.5" text-anchor="start" fill="#000" font-weight="normal" textLength="48.2" lengthAdjust="spacingAndGlyphs" stroke="#000" stroke-width="0.15">mph</text><text x="953.9" y="615.0" font-size="19.5" text-anchor="start" fill="#000" font-weight="normal" textLength="45.0" lengthAdjust="spacingAndGlyphs" stroke="#000" stroke-width="0.15">rpm</text><text x="1074.6" y="580.8" font-size="18.5" text-anchor="start" fill="#1414f0" font-weight="normal" textLength="48.8" lengthAdjust="spacingAndGlyphs" stroke="#1414f0" stroke-width="0.35">ratio</text><text x="1075.5" y="612.4" font-size="18.5" text-anchor="start" fill="#1414f0" font-weight="normal" textLength="25.1" lengthAdjust="spacingAndGlyphs" stroke="#1414f0" stroke-width="0.35">tcf</text><text x="1074.6" y="644.8" font-size="18.5" text-anchor="start" fill="#1414f0" font-weight="normal" textLength="47.2" lengthAdjust="spacingAndGlyphs" stroke="#1414f0" stroke-width="0.35">gain</text><text x="1193.1" y="579.0" font-size="19.5" text-anchor="start" fill="#fff" font-weight="normal" textLength="64.8" lengthAdjust="spacingAndGlyphs" stroke="#fff" stroke-width="0.15">5.107</text><text x="1207.0" y="611.8" font-size="19.5" text-anchor="start" fill="#fff" font-weight="normal" textLength="50.9" lengthAdjust="spacingAndGlyphs" stroke="#fff" stroke-width="0.15">1.00</text><text x="1221.9" y="646.0" font-size="19.5" text-anchor="start" fill="#fff" font-weight="normal" textLength="36.0" lengthAdjust="spacingAndGlyphs" stroke="#fff" stroke-width="0.15">4.3</text></g>
<rect x="0" y="668.2" width="1280" height="1.4" fill="#1e1e1e"/>
<rect x="0" y="669.6" width="1280" height="70.4" fill="#ffffff"/>
<rect x="0" y="737.5" width="1280" height="2.5" fill="#303030"/>
<g stroke="#111" stroke-width="0.8" stroke-linejoin="round">
<path fill="#000" d="M29.3,679.5 L51.1,679.5 L45.7,692.7 L62.7,692.7 L68.1,679.5 L88.9,679.5 L73.8,716.3 L52.5,716.3 L59.6,700.3 L42.6,700.3 L35.9,716.3 L14.2,716.3 Z"/>
<path fill="#000" fill-rule="evenodd" d="M92.8,679.8 L139.1,679.8 C146,679.8 149.6,684 148.7,689.3 C147.8,695 142,699.7 135.7,699.7 L109.8,699.7 L98.5,716.5 L77.3,716.5 Z M114.9,687.1 L125.3,687.1 C128.5,687.1 128,692.7 123.6,692.7 L111.5,692.7 Z"/>
</g>
<path fill="#e82224" stroke="#1a1a1a" stroke-width="1.6" stroke-linejoin="round" d="M178.9,679.3 L221.2,679.8 L217.8,688.4 L184.9,688.4 L205.7,706.6 C209,709.5 210.5,713 209.1,716.5 C207.5,721 203,725 194,728.2 C189,729.5 184,729.5 178.9,729.5 L9.2,729.5 C8.2,729.5 7.8,728.8 8.3,727.9 L11.6,721.2 C12,720.5 12.4,720.2 13.3,720.2 L172,720.2 L152.1,701.4 C149,698.5 149,693.5 151.5,689.5 C154.5,684.5 160,681 167.7,680.2 C171,679.5 175,679.3 178.9,679.3 Z"/>
<circle cx="16.2" cy="724.8" r="3.2" fill="none" stroke="#7a1010" stroke-width="0.9"/><text x="16.2" y="727" font-size="5.5" text-anchor="middle" fill="#7a1010" font-family="Liberation Sans, sans-serif">R</text>
<g font-family="Liberation Sans, sans-serif" font-weight="bold" font-style="italic" stroke-linejoin="round">
<text x="233" y="698.8" font-size="27" fill="#000" stroke="#000" stroke-width="4.2" textLength="209" lengthAdjust="spacingAndGlyphs">PERFORMANCE</text>
<text x="231" y="726.8" font-size="27" fill="#000" stroke="#000" stroke-width="4.2" textLength="150" lengthAdjust="spacingAndGlyphs">PRODUCTS</text>
<text x="233" y="698.8" font-size="27" fill="#fff" stroke="#fff" stroke-width="1.2" textLength="209" lengthAdjust="spacingAndGlyphs">PERFORMANCE</text>
<text x="231" y="726.8" font-size="27" fill="#fff" stroke="#fff" stroke-width="1.2" textLength="150" lengthAdjust="spacingAndGlyphs">PRODUCTS</text>
</g>
<g font-family="Liberation Sans, sans-serif" fill="#1a1a1a" stroke="#1a1a1a" stroke-width="0.3">
<text x="511.0" y="685.0" font-size="9.8" textLength="49.5" lengthAdjust="spacingAndGlyphs">Folder</text>
<text x="512.7" y="707.0" font-size="9.8" textLength="52.5" lengthAdjust="spacingAndGlyphs">Run ID</text>
<text x="529.0" y="729.0" font-size="9.8" textLength="33.5" lengthAdjust="spacingAndGlyphs">Date</text>
<rect x="570" y="673" width="199" height="17" fill="#d8d8d8"/>
<rect x="570" y="673" width="198" height="16" fill="#111"/>
<rect x="572" y="675" width="196" height="14" fill="#fff"/>
<text x="574" y="685.0" font-size="9.8" textLength="130.0" lengthAdjust="spacingAndGlyphs">hps 2013 civic si</text>
<rect x="570" y="696" width="199" height="17" fill="#d8d8d8"/>
<rect x="570" y="696" width="198" height="16" fill="#111"/>
<rect x="572" y="698" width="196" height="14" fill="#fff"/>
<text x="574" y="707.3" font-size="9.8" textLength="7.5" lengthAdjust="spacingAndGlyphs">1</text>
<rect x="570" y="717" width="199" height="17" fill="#d8d8d8"/>
<rect x="570" y="717" width="198" height="16" fill="#111"/>
<rect x="572" y="719" width="196" height="14" fill="#fff"/>
<text x="574" y="728.7" font-size="9.8" textLength="173.0" lengthAdjust="spacingAndGlyphs">25-Jul-2013 &#160; 12:29:55</text>
</g>
<g font-family="Liberation Sans, sans-serif" font-weight="bold" font-style="italic" stroke-linejoin="round">
<text x="0" y="0" font-size="37" fill="#2a5cc8" stroke="#2a5cc8" stroke-width="3.2" transform="translate(816.0,715.5) skewX(-16)" textLength="212.0" lengthAdjust="spacingAndGlyphs">Dyna</text>
<text x="0" y="0" font-size="37" fill="#d0141e" stroke="#d0141e" stroke-width="3.2" transform="translate(1027.0,715.5) skewX(-16)" textLength="205.0" lengthAdjust="spacingAndGlyphs">pack</text>
<text x="0" y="0" font-size="37" fill="#ffffff" stroke="#ffffff" stroke-width="6" transform="translate(811.0,709.5) skewX(-16)" textLength="212.0" lengthAdjust="spacingAndGlyphs">Dyna</text>
<text x="0" y="0" font-size="37" fill="#ffffff" stroke="#ffffff" stroke-width="6" transform="translate(1022.0,709.5) skewX(-16)" textLength="205.0" lengthAdjust="spacingAndGlyphs">pack</text>
<text x="0" y="0" font-size="37" fill="#d0141e" stroke="#d0141e" stroke-width="3.2" transform="translate(811.0,709.5) skewX(-16)" textLength="212.0" lengthAdjust="spacingAndGlyphs">Dyna</text>
<text x="0" y="0" font-size="37" fill="#1c5cc4" stroke="#1c5cc4" stroke-width="3.2" transform="translate(1022.0,709.5) skewX(-16)" textLength="205.0" lengthAdjust="spacingAndGlyphs">pack</text>
</g>
<g font-family="Liberation Sans, sans-serif" font-weight="bold" fill="#2236a6" stroke="#2236a6" stroke-width="1.1" font-size="10.5">
<text x="922" y="732" textLength="92" lengthAdjust="spacing">CHASSIS</text>
<text x="1061" y="732" textLength="178" lengthAdjust="spacing">DYNAMOMETERS</text>
</g>
</svg></body></html>
